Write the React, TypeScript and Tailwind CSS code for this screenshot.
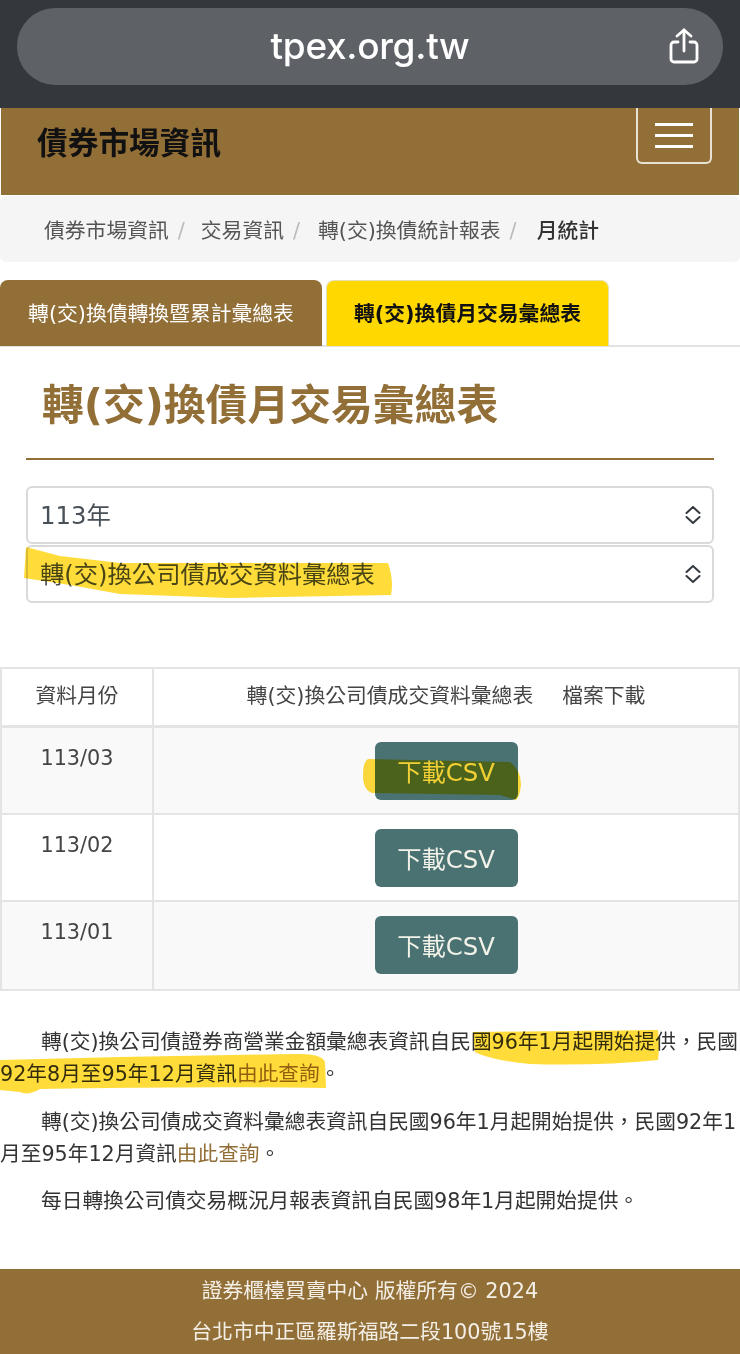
import React from 'react';

const cjk = "font-['DejaVu_Sans','Noto_Sans_CJK_TC',sans-serif]";

const rows = ['113/03', '113/02', '113/01'];

function Chevrons() {
  return (
    <svg width="16" height="18" viewBox="0 0 16 18" fill="none" stroke="#343a40" strokeWidth="2" strokeLinecap="round" strokeLinejoin="round">
      <path d="M1.5 7L8 1l6.5 6" />
      <path d="M1.5 11L8 17l6.5-6" />
    </svg>
  );
}

function Marker({ d }: { d: string }) {
  return (
    <svg className="absolute left-0 top-0 w-[740px] h-[1354px] pointer-events-none mix-blend-multiply blur-[0.7px]" fill="#ffdc3a">
      <path d={d} />
    </svg>
  );
}

export default function App() {
  return (
    <div className={`${cjk} relative w-[740px] h-[1354px] overflow-hidden bg-white text-[#212529] text-[20.8px]`}>
      {/* Browser bar */}
      <div className="h-[108px] bg-[#34373b] px-[17px] pt-[8px]">
        <div className="relative h-[77px] rounded-[38px] bg-[#5e6266] flex items-center justify-center">
          <span className="font-['Inter',sans-serif] text-[37px] font-medium tracking-[-0.3px] text-white -translate-y-[1px]">tpex.org.tw</span>
          <svg className="absolute right-[24px] top-[20px]" width="30" height="36" viewBox="0 0 30 36" fill="none" stroke="#fff" strokeWidth="2.8" strokeLinecap="round" strokeLinejoin="round">
            <path d="M15 2v21" />
            <path d="M8 8l7-6 7 6" />
            <path d="M9 14H5a3 3 0 0 0-3 3v14a3 3 0 0 0 3 3h20a3 3 0 0 0 3-3V17a3 3 0 0 0-3-3h-4" />
          </svg>
        </div>
      </div>

      {/* Navbar */}
      <div className="h-[87px] mx-[1px] bg-[#936f38] flex justify-between pl-[36px] pr-[27px]">
        <div className="text-[30.7px] font-bold text-[#111] pt-[16px] leading-[40px]">債券市場資訊</div>
        <div className="w-[76px] h-[56px] rounded-b-[6px] border-2 border-t-0 border-[#e8e2d6] flex flex-col items-center justify-center gap-[8px]">
          <span className="block w-[38px] h-[3px] bg-white" />
          <span className="block w-[38px] h-[3px] bg-white" />
          <span className="block w-[38px] h-[3px] bg-white" />
        </div>
      </div>

      {/* Breadcrumb */}
      <div className="mt-[1px] h-[66px] bg-[#f5f5f5] rounded-[6px] flex items-center pl-[44px] pt-[5px] text-[#555]">
        <span>債券市場資訊</span>
        <span className="text-[#bbb] ml-[9px] mr-[16px]">/</span>
        <span>交易資訊</span>
        <span className="text-[#bbb] ml-[9px] mr-[18px]">/</span>
        <span>轉(交)換債統計報表</span>
        <span className="text-[#bbb] ml-[9px] mr-[16px]">/</span>
        <span className="font-medium text-[#333] ml-[4px]">月統計</span>
      </div>

      {/* Tabs */}
      <div className="mt-[18px] h-[67px] border-b-2 border-[#e2e2e2] flex gap-[4px]">
        <div className="w-[322px] h-[66px] pt-[3px] rounded-t-[8px] bg-[#936f38] text-white flex items-center justify-center">轉(交)換債轉換暨累計彙總表</div>
        <div className="w-[283px] h-[66px] pt-[3px] rounded-t-[8px] bg-[#ffd800] border border-b-0 border-[#e6dfb0] text-[#111] font-bold flex items-center justify-center">轉(交)換債月交易彙總表</div>
      </div>

      {/* Title and selects */}
      <div className="px-[26px]">
        <h1 className="text-[41.8px] font-bold text-[#936f38] h-[113px] pl-[16px] flex items-center border-b-2 border-[#936f38] leading-none pt-[6px]">轉(交)換債月交易彙總表</h1>
        <div className="mt-[26px] flex flex-col gap-[1px]">
          {['113年', '轉(交)換公司債成交資料彙總表'].map((label) => (
            <div key={label} className="h-[58px] rounded-[6px] border-2 border-[#d9d9d9] flex items-center justify-between pl-[12px] pr-[11px] text-[24.3px] text-[#495057]">
              <span className="pt-[2px]">{label}</span>
              <Chevrons />
            </div>
          ))}
        </div>
      </div>

      {/* Table */}
      <div className="mt-[64px] border-2 border-[#e4e4e4] text-[#444]">
        <div className="h-[59px] flex border-b-[3px] border-[#e4e4e4]">
          <div className="w-[152px] flex items-center justify-center border-r-2 border-[#e4e4e4]">資料月份</div>
          <div className="flex-1 flex items-center justify-center gap-[29px]">
            <span>轉(交)換公司債成交資料彙總表</span>
            <span>檔案下載</span>
          </div>
        </div>
        {rows.map((month, i) => (
          <div key={month} className={`h-[87px] flex ${i % 2 === 0 ? 'bg-[#f9f9f9]' : 'bg-white'} ${i < 2 ? 'border-b-2 border-[#e4e4e4]' : ''}`}>
            <div className="w-[152px] text-center pt-[15px] border-r-2 border-[#e4e4e4]">{month}</div>
            <div className="flex-1 flex justify-center pt-[14px]">
              <button className="w-[143px] h-[58px] pt-[5px] rounded-[6px] bg-[#4a7273] text-[24.3px] text-[#f2f2e8]">下載CSV</button>
            </div>
          </div>
        ))}
      </div>

      {/* Notes */}
      <div className="mt-[35px] text-[#333] text-[20.7px] leading-[32px]">
        <p className="indent-[41px]">轉(交)換公司債證券商營業金額彙總表資訊自民國96年1月起開始提供，民國92年8月至95年12月資訊<span className="text-[#936f38]">由此查詢</span>。</p>
        <p className="indent-[41px] mt-[16px]">轉(交)換公司債成交資料彙總表資訊自民國96年1月起開始提供，民國92年1月至95年12月資訊<span className="text-[#936f38]">由此查詢</span>。</p>
        <p className="indent-[41px] mt-[15px]">每日轉換公司債交易概況月報表資訊自民國98年1月起開始提供。</p>
      </div>

      {/* Footer */}
      <div className="absolute bottom-0 inset-x-0 h-[85px] bg-[#936f38] text-[#f3efe6] text-center leading-[41px] pt-[2px]">
        <div>證券櫃檯買賣中心 版權所有© 2024</div>
        <div>台北市中正區羅斯福路二段100號15樓</div>
      </div>

      {/* Marker highlights drawn over the page */}
      <Marker d="M26 547L60 556L120 563L388 563Q394 580 391 595L230 598L120 594L70 585L24 578Z" />
      <Marker d="M368 759L510 762Q521 770 521 785Q520 796 516 800L500 795L372 793Q363 790 363 775Q363 762 368 759Z" />
      <Marker d="M473 1032L658 1030Q660 1045 658 1060Q600 1066 530 1064Q490 1060 475 1052Z" />
      <Marker d="M0 1060Q150 1056 300 1054Q322 1054 325 1062L326 1088Q200 1086 40 1089Q28 1096 20 1092L0 1090Z" />
    </div>
  );
}
